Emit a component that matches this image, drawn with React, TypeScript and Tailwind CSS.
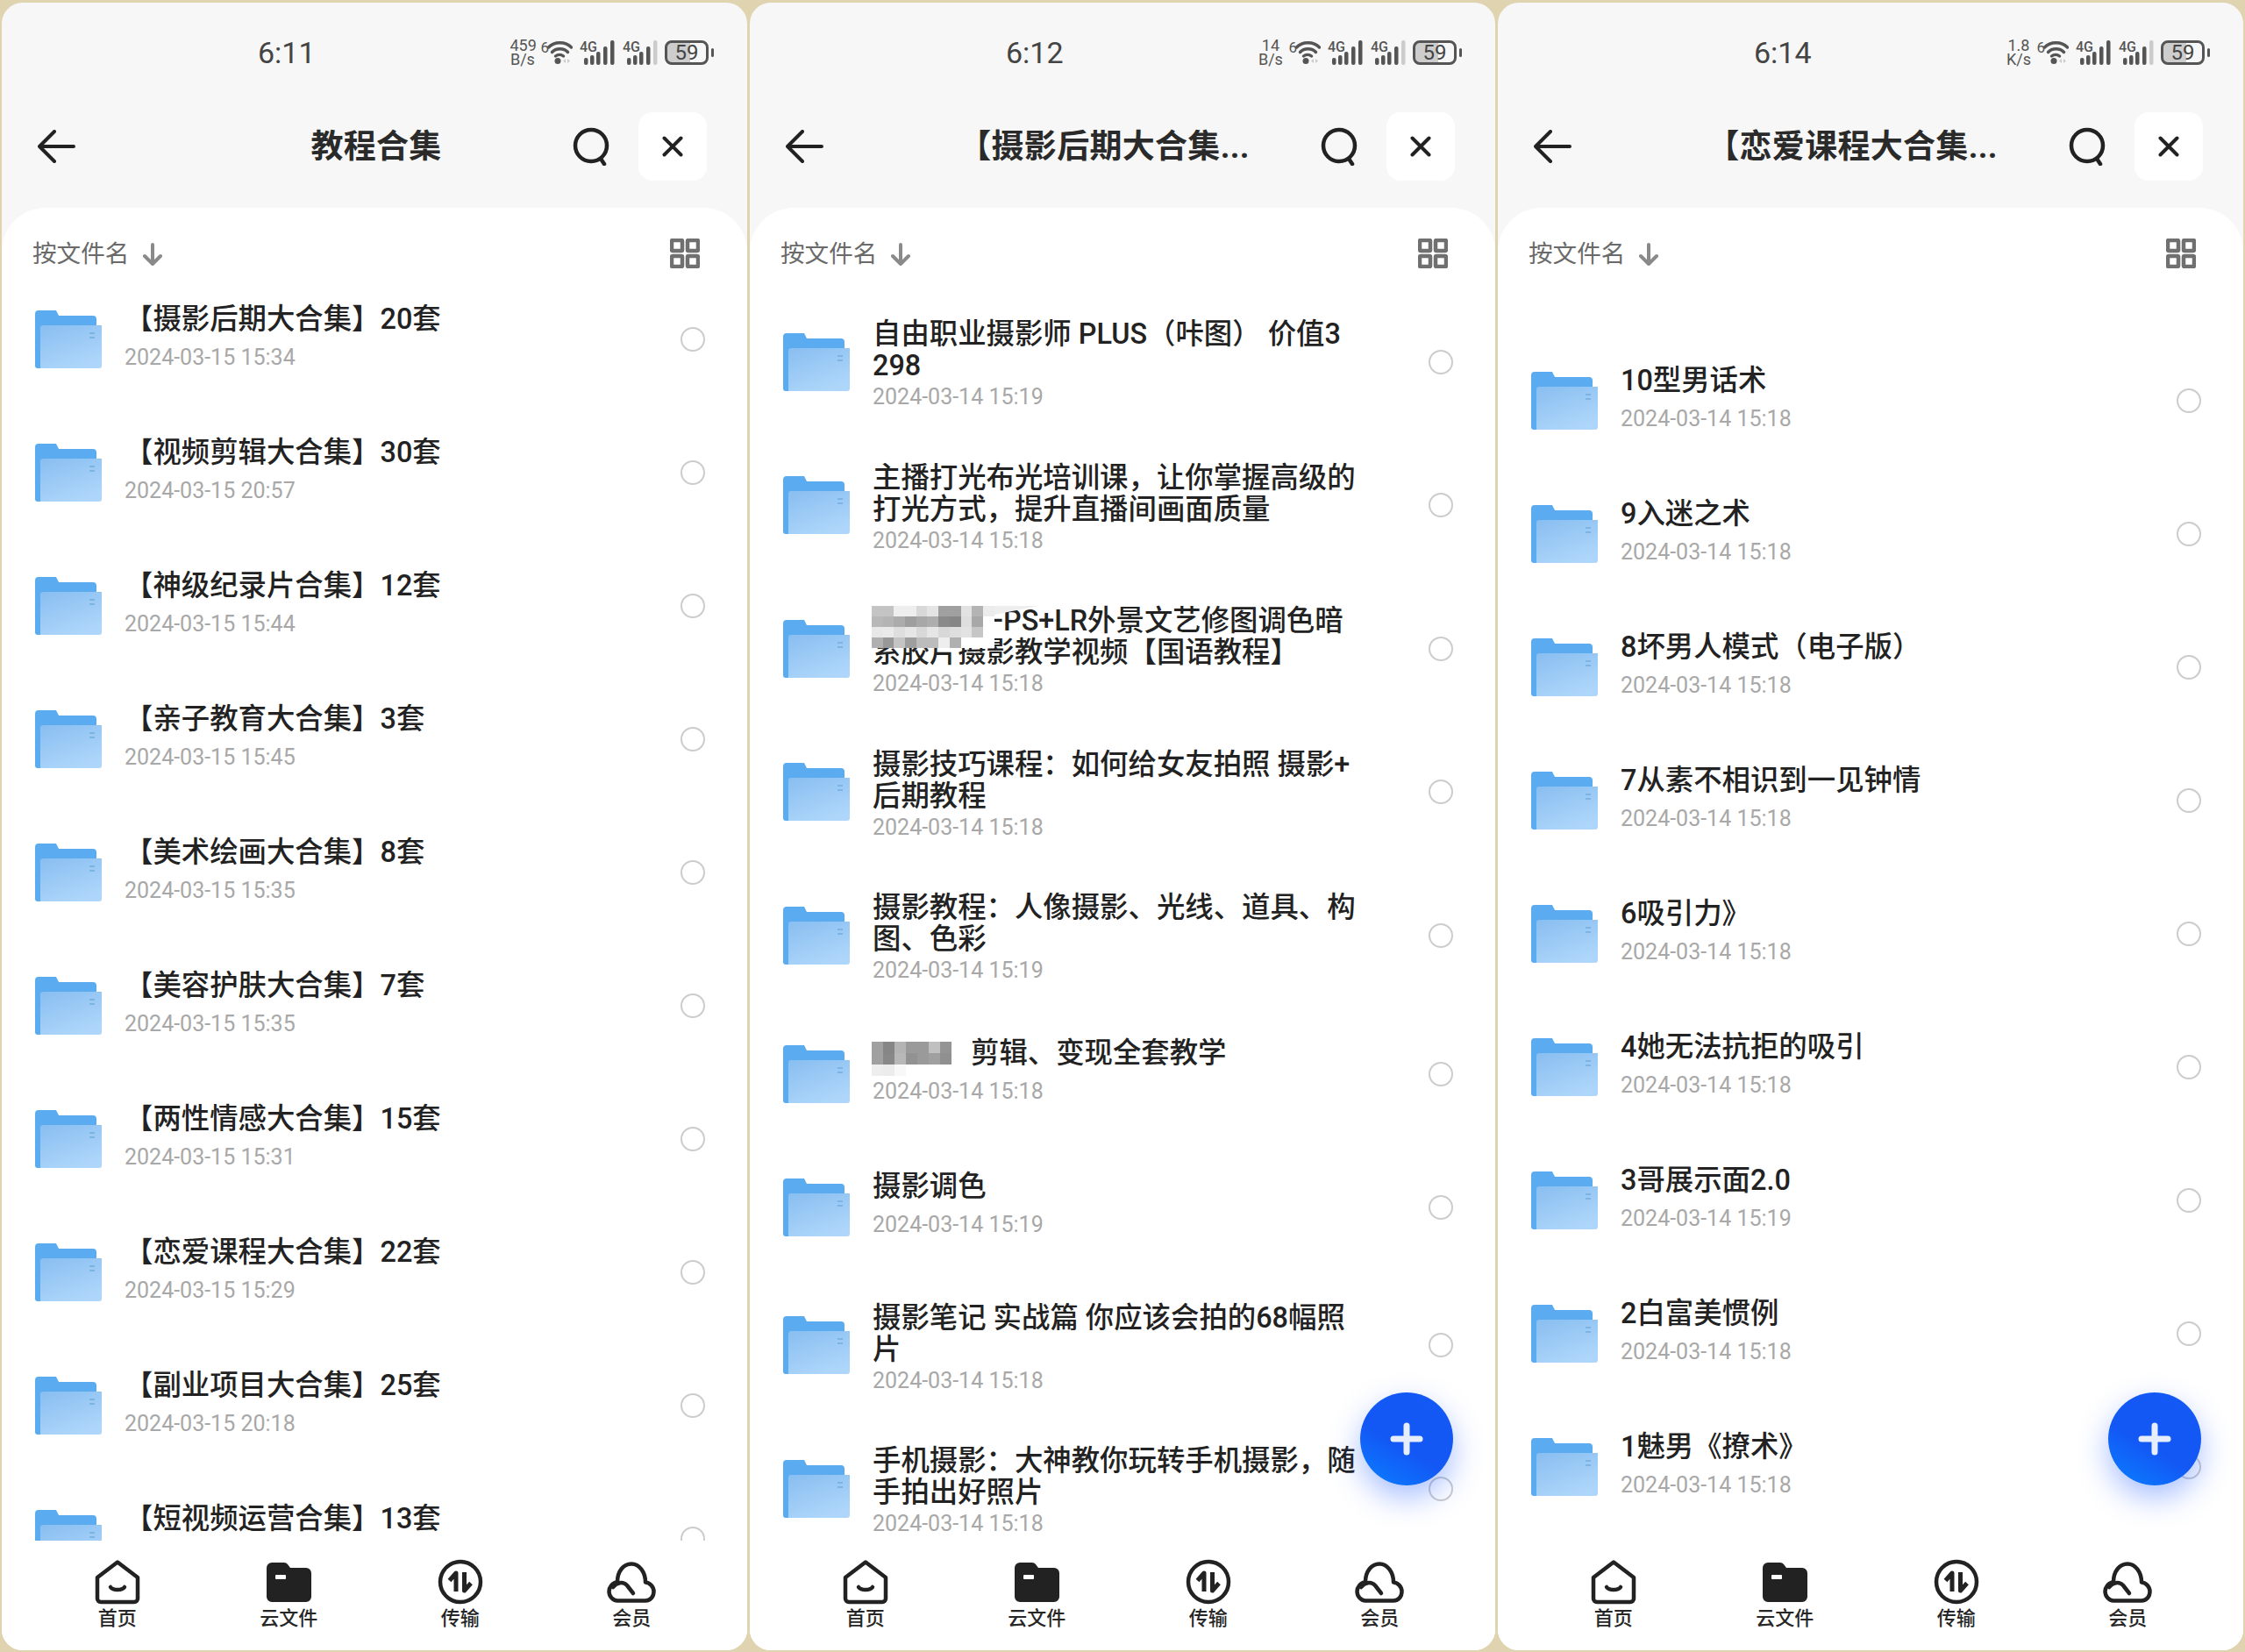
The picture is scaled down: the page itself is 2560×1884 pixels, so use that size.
import React from 'react';

type Item = { title: string; date: string; two?: boolean; gap?: string; mosaic?: 'a' | 'b' };

const tutorials: Item[] = [
  { title: '【摄影后期大合集】20套', date: '2024-03-15 15:34' },
  { title: '【视频剪辑大合集】30套', date: '2024-03-15 20:57' },
  { title: '【神级纪录片合集】12套', date: '2024-03-15 15:44' },
  { title: '【亲子教育大合集】3套', date: '2024-03-15 15:45' },
  { title: '【美术绘画大合集】8套', date: '2024-03-15 15:35' },
  { title: '【美容护肤大合集】7套', date: '2024-03-15 15:35' },
  { title: '【两性情感大合集】15套', date: '2024-03-15 15:31' },
  { title: '【恋爱课程大合集】22套', date: '2024-03-15 15:29' },
  { title: '【副业项目大合集】25套', date: '2024-03-15 20:18' },
  { title: '【短视频运营合集】13套', date: '2024-03-15 15:30' },
];

const photo: Item[] = [
  { title: '自由职业摄影师 PLUS（咔图） 价值3\n298', date: '2024-03-14 15:19', two: true },
  { title: '主播打光布光培训课，让你掌握高级的\n打光方式，提升直播间画面质量', date: '2024-03-14 15:18', two: true },
  { title: '—PS+LR外景文艺修图调色暗\n系胶片摄影教学视频【国语教程】', date: '2024-03-14 15:18', two: true, gap: 'w-[124px]', mosaic: 'a' },
  { title: '摄影技巧课程：如何给女友拍照 摄影+\n后期教程', date: '2024-03-14 15:18', two: true },
  { title: '摄影教程：人像摄影、光线、道具、构\n图、色彩', date: '2024-03-14 15:19', two: true },
  { title: '剪辑、变现全套教学', date: '2024-03-14 15:18', gap: 'w-[112px]', mosaic: 'b' },
  { title: '摄影调色', date: '2024-03-14 15:19' },
  { title: '摄影笔记 实战篇 你应该会拍的68幅照\n片', date: '2024-03-14 15:18', two: true },
  { title: '手机摄影：大神教你玩转手机摄影，随\n手拍出好照片', date: '2024-03-14 15:18', two: true },
];

const love: Item[] = [
  { title: '10型男话术', date: '2024-03-14 15:18' },
  { title: '9入迷之术', date: '2024-03-14 15:18' },
  { title: '8坏男人模式（电子版）', date: '2024-03-14 15:18' },
  { title: '7从素不相识到一见钟情', date: '2024-03-14 15:18' },
  { title: '6吸引力》', date: '2024-03-14 15:18' },
  { title: '4她无法抗拒的吸引', date: '2024-03-14 15:18' },
  { title: '3哥展示面2.0', date: '2024-03-14 15:19' },
  { title: '2白富美惯例', date: '2024-03-14 15:18' },
  { title: '1魅男《撩术》', date: '2024-03-14 15:18' },
];

const mosaicA = [
  ['#c4c4c4', '#c4c4c4', '#eeeeee', '#eeeeee', '#d8d8d8', '#e4e4e4', '#a0a0a0', '#a0a0a0', '#e2e2e2', '#b4b4b4', '#ececec'],
  ['#b8b8b8', '#b4b4b4', '#acacac', '#9e9e9e', '#a8a8a8', '#aeaeae', '#8a8a8a', '#868686', '#dedede', '#a8a8a8', '#ffffff'],
  ['#e8e8e8', '#eaeaea', '#dedede', '#e6e6e6', '#d8d8d8', '#e6e6e6', '#d8d8d8', '#dedede', '#e2e2e2', '#c6c6c6', '#ffffff'],
  ['#b0b0b0', '#989898', '#c4c4c4', '#9e9e9e', '#bcbcbc', '#bcbcbc', '#eeeeee', '#b0b0b0', '#ffffff', '#ffffff', '#ffffff'],
];

const mosaicB = [
  ['#a0a0a0', '#868686', '#b4b4b4', '#9a9a9a', '#9a9a9a', '#c0c0c0', '#949494'],
  ['#a0a0a0', '#888888', '#b8b8b8', '#929292', '#9a9a9a', '#a0a0a0', '#909090'],
  ['#eeeeee', '#ececec', '#f8f8f8', '#ffffff', '#ffffff', '#ffffff', '#ffffff'],
];

const Mosaic = ({ kind }: { kind: 'a' | 'b' }) => {
  const rows = kind === 'a' ? mosaicA : mosaicB;
  return (
    <div className={kind === 'a' ? 'absolute left-[139px] top-[33px]' : 'absolute left-[139px] top-[39px]'}>
      {kind === 'a' && <div className="absolute left-[130px] top-0 h-[12px] w-[60px] bg-[#eeeeee] [clip-path:polygon(0_0,100%_0,0_100%)]" />}
      <div className="blur-[0.7px]">
        {rows.map((row, i) => (
          <div key={i} className="flex">
            {row.map((c, j) => (
              <div key={j} className={kind === 'a' ? 'h-[12px] w-[12.7px]' : 'h-[13px] w-[13px]'} style={{ backgroundColor: c }} />
            ))}
          </div>
        ))}
      </div>
    </div>
  );
};

const Folder = () => (
  <svg width="76" height="66" viewBox="0 0 76 66" className="shrink-0">
    <defs>
      <linearGradient id="folderFront" x1="0.1" y1="0" x2="0.6" y2="1">
        <stop offset="0" stopColor="#8abff1" />
        <stop offset="1" stopColor="#aed6fa" />
      </linearGradient>
    </defs>
    <path d="M0 4a4 4 0 0 1 4-4h20l3 6h39a4 4 0 0 1 4 4v56H3a3 3 0 0 1-3-3z" fill="#5aabf0" />
    <path d="M6 20a3 3 0 0 1 3-3h67v46a3 3 0 0 1-3 3H6z" fill="url(#folderFront)" />
    <path d="M62 26h6M62 31h6" stroke="#7db4e6" strokeWidth="2" />
  </svg>
);

const Row = ({ item }: { item: Item }) => (
  <div className={item.two ? 'relative flex h-[163.5px] items-center pl-[38px] pr-[48px]' : 'relative flex h-[152px] items-center pl-[38px] pr-[48px]'}>
    <Folder />
    <div className={item.two ? 'ml-[26px] flex-1 pt-[9px]' : 'ml-[26px] flex-1 pb-[3px]'}>
      <div className="whitespace-pre-line text-[32.4px] font-medium leading-[36px] text-[#222222]">
        {item.gap && <span className={`inline-block ${item.gap}`} />}
        {item.title}
      </div>
      <div className={item.two ? 'text-[25px] leading-[36px] text-[#a8a8a8]' : 'mt-[8px] text-[25px] leading-[36px] text-[#a8a8a8]'}>{item.date}</div>
    </div>
    <div className="h-[28px] w-[28px] shrink-0 rounded-full border-[2.5px] border-[#cccccc]" />
    {item.mosaic && <Mosaic kind={item.mosaic} />}
  </div>
);

const Signal = ({ faded }: { faded?: boolean }) => (
  <svg width="40" height="28" viewBox="0 0 40 28" className="overflow-visible">
    <text x="0" y="13" fontSize="16" fontWeight="500" fill="#555555">4G</text>
    <rect x="5" y="20" width="4.5" height="8" rx="2" fill="#555555" />
    <rect x="12" y="17" width="4.5" height="11" rx="2" fill="#555555" />
    <rect x="19" y="13" width="4.5" height="15" rx="2" fill="#555555" />
    <rect x="27" y="7" width="4.5" height="21" rx="2" fill="#555555" />
    <rect x="35" y="0" width="4.5" height="28" rx="2" fill={faded ? '#cccccc' : '#555555'} />
  </svg>
);

const Wifi = () => (
  <svg width="29" height="28" viewBox="0 0 29 28" fill="none" stroke="#555555" strokeWidth="3.5" strokeLinecap="round">
    <path d="M1.5 8C8 1 21 1 27.5 8" />
    <path d="M5.5 13.5C10 8.5 19 8.5 23.5 13.5" />
    <path d="M9.5 18C12 16 16 16 18.5 18" />
    <circle cx="12" cy="23.5" r="3.5" fill="#555555" stroke="none" />
    <path d="M21 21l-3 2.5 3 2.5zM23 21l3 2.5-3 2.5z" fill="#cccccc" stroke="none" />
  </svg>
);

const StatusBar = ({ time, speed, unit }: { time: string; speed: string; unit: string }) => (
  <div className="flex h-[112px] items-center pl-[292px] pr-[38px] pt-[2px] text-[#555555]">
    <div className="text-[34px] leading-none text-[#444444]">{time}</div>
    <div className="ml-auto flex items-center">
      <div className="w-[34px] pl-[5px] text-center text-[18px] leading-[16px]">
        <div>{speed}</div>
        <div>{unit}</div>
      </div>
      <div className="ml-[6px] mb-[12px] text-[17px] leading-none">6</div>
      <div className="-ml-[2px]"><Wifi /></div>
      <div className="ml-[8px]"><Signal /></div>
      <div className="ml-[9px]"><Signal faded /></div>
      <div className="ml-[8px] flex h-[28px] w-[50px] items-center justify-center rounded-[8px] border-[3px] border-[#555555] bg-[linear-gradient(to_right,#cdcdcd_59%,transparent_59%)] text-[24px] leading-none text-[#444444]">59</div>
      <div className="ml-[3px] h-[10px] w-[3px] rounded-full bg-[#555555]" />
    </div>
  </div>
);

const TitleBar = ({ title, offset }: { title: string; offset: string }) => (
  <div className="mb-[18px] flex h-[104px] items-center pl-[41px] pr-[46px]">
    <svg width="44" height="38" viewBox="0 0 44 38" fill="none" stroke="#222222" strokeWidth="4" strokeLinecap="round" strokeLinejoin="round">
      <path d="M2 19H41M19 2L2 19l17 17" />
    </svg>
    <div className={`flex-1 text-center text-[37px] font-bold leading-none tracking-[0.3px] text-[#2a2a2a] ${offset}`}>{title}</div>
    <svg width="44" height="44" viewBox="0 0 44 44" fill="none" stroke="#222222" strokeWidth="4.5" strokeLinecap="round">
      <circle cx="21" cy="21" r="18" />
      <path d="M32 36l4 6" />
    </svg>
    <div className="ml-[31px] flex h-[78px] w-[78px] items-center justify-center rounded-[16px] bg-white">
      <svg width="24" height="24" viewBox="0 0 24 24" fill="none" stroke="#222222" strokeWidth="4" strokeLinecap="round">
        <path d="M2.5 2.5l19 19M21.5 2.5l-19 19" />
      </svg>
    </div>
  </div>
);

const SortBar = () => (
  <div className="flex h-[74px] items-start justify-between pl-[35px] pr-[54px] pt-[30px]">
    <div className="flex h-[44px] items-center pt-[2px]">
      <span className="text-[27.6px] text-[#6a6a6a]">按文件名</span>
      <svg className="ml-[15px]" width="24" height="26" viewBox="0 0 24 26" fill="none" stroke="#8a8a8a" strokeWidth="4" strokeLinecap="round" strokeLinejoin="round">
        <path d="M12 2v22M3 15l9 9 9-9" />
      </svg>
    </div>
    <svg className="mt-[5px]" width="34" height="34" viewBox="0 0 34 34" fill="none" stroke="#707070" strokeWidth="4.5">
      <rect x="2" y="2" width="12" height="12" rx="1" />
      <rect x="20" y="2" width="12" height="12" rx="1" />
      <rect x="2" y="20" width="12" height="12" rx="1" />
      <rect x="20" y="20" width="12" height="12" rx="1" />
    </svg>
  </div>
);

const NavItem = ({ label, children }: { label: string; children: React.ReactNode }) => (
  <div className="flex flex-col items-center">
    <div className="flex h-[52px] items-center">{children}</div>
    <div className="mt-[2px] text-[22px] font-medium leading-[28px] text-[#262626]">{label}</div>
  </div>
);

const BottomNav = () => (
  <div className="grid h-[125px] shrink-0 grid-cols-4 bg-white px-[34px] pt-[21px]">
    <NavItem label="首页">
      <svg width="52" height="51" viewBox="0 0 52 51" fill="none" stroke="#222222" strokeWidth="4.5" strokeLinejoin="round" strokeLinecap="round">
        <path d="M26 2.5L3 20v24a4 4 0 0 0 4 4h38a4 4 0 0 0 4-4V20z" />
        <path d="M18 31c3 4 13 4 16 0" />
      </svg>
    </NavItem>
    <NavItem label="云文件">
      <svg width="51" height="45" viewBox="0 0 51 45">
        <path d="M0 6a6 6 0 0 1 6-6h14a5 5 0 0 1 4 2l3 4h18a6 6 0 0 1 6 6v27a6 6 0 0 1-6 6H6a6 6 0 0 1-6-6z" fill="#222222" />
        <rect x="10" y="14" width="12" height="5" rx="1" fill="#ffffff" />
      </svg>
    </NavItem>
    <NavItem label="传输">
      <svg width="52" height="52" viewBox="0 0 52 52" fill="none" stroke="#222222" strokeWidth="4.5" strokeLinejoin="round">
        <circle cx="26" cy="26" r="23" />
        <path d="M21 37V16L13.5 24.5" strokeWidth="5" />
        <path d="M30.5 15V36L38 27.5" strokeWidth="5" />
      </svg>
    </NavItem>
    <NavItem label="会员">
      <svg width="56" height="47" viewBox="0 0 56 47" fill="none" stroke="#222222" strokeWidth="4.5" strokeLinecap="round" strokeLinejoin="round">
        <path d="M12 44.5H44C50 44.5 53.5 39.5 53.5 34C53.5 28.5 49 24 44 23.5C44 12 37 2.5 28 2.5C19 2.5 12 11 12 23C6.5 24 2.5 29 2.5 34C2.5 39.5 7 44.5 12 44.5Z" />
        <path d="M7 29C11 24 18 22 23 27L30 36" />
      </svg>
    </NavItem>
  </div>
);

const Fab = () => (
  <div className="absolute bottom-[188px] right-[48px] flex h-[106px] w-[106px] items-center justify-center rounded-full bg-[linear-gradient(30deg,#0a80ff_0%,#1358f5_42%,#1458f6_100%)] shadow-[0_14px_34px_rgba(30,90,255,0.38)]">
    <svg width="38" height="38" viewBox="0 0 38 38" stroke="#e6edfd" strokeWidth="7" strokeLinecap="round">
      <path d="M19 4v30M4 19h30" />
    </svg>
  </div>
);

type PhoneProps = {
  time: string;
  speed: string;
  unit: string;
  title: string;
  offset: string;
  items: Item[];
  listTop: string;
  fab?: boolean;
};

const Phone = ({ time, speed, unit, title, offset, items, listTop, fab }: PhoneProps) => (
  <div className="relative flex h-[1879px] w-[850px] flex-col overflow-hidden rounded-[24px] bg-[#f7f7f7]">
    <StatusBar time={time} speed={speed} unit={unit} />
    <TitleBar title={title} offset={offset} />
    <div className="flex min-h-0 flex-1 flex-col overflow-hidden rounded-t-[50px] bg-white">
      <SortBar />
      <div className={`min-h-0 flex-1 overflow-hidden ${listTop}`}>
        {items.map((item) => (
          <Row key={item.title} item={item} />
        ))}
      </div>
      <BottomNav />
    </div>
    {fab && <Fab />}
  </div>
);

const App = () => {
  return (
    <div className="flex h-[1884px] w-[2560px] gap-[3px] bg-[#e0d4b0] pl-[2px] pt-[3px] font-['Roboto','Noto_Sans_CJK_SC',sans-serif]">
      <Phone time="6:11" speed="459" unit="B/s" title="教程合集" offset="pl-[118px]" items={tutorials} listTop="pt-0" />
      <Phone time="6:12" speed="14" unit="B/s" title="【摄影后期大合集..." offset="pl-[72px]" items={photo} listTop="pt-[20px]" fab />
      <Phone time="6:14" speed="1.8" unit="K/s" title="【恋爱课程大合集..." offset="pl-[72px]" items={love} listTop="pt-[70px]" fab />
    </div>
  );
};

export default App;
